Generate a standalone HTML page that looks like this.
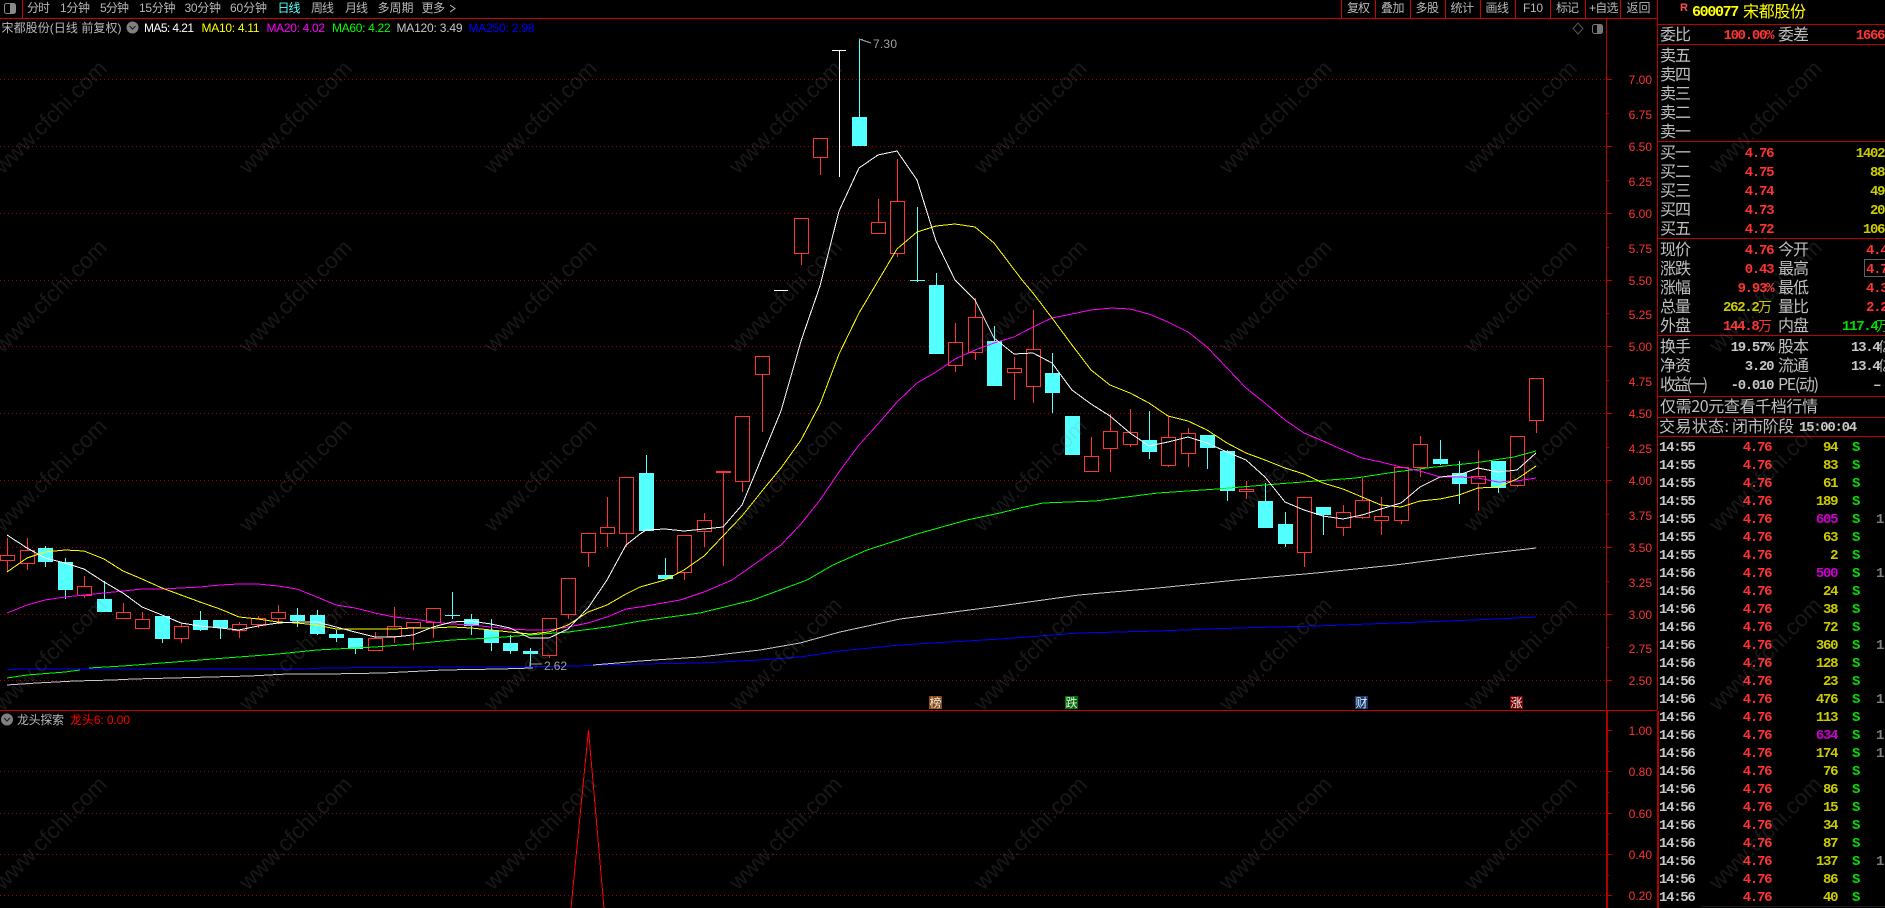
<!DOCTYPE html>
<html lang="zh-CN">
<head>
<meta charset="utf-8">
<title>宋都股份</title>
<style>
html,body{margin:0;padding:0;background:#000;width:1885px;height:908px;overflow:hidden}
svg{display:block}
text{font-family:"Liberation Sans","WenQuanYi Zen Hei","Noto Sans CJK SC",sans-serif;white-space:pre}
.t{font-size:12px;fill:#b8b8b8;font-family:"Liberation Sans","WenQuanYi Zen Hei","Noto Sans CJK SC",sans-serif}
.l{font-size:16px;fill:#c0c0c0;font-family:"WenQuanYi Zen Hei","Noto Sans CJK SC",sans-serif}
.a{font-size:12px;fill:#ff3333;text-anchor:end}
.m{font-family:"Liberation Mono",monospace;font-weight:bold;font-size:14px;letter-spacing:-1.3px}
.e{text-anchor:end;transform:translateX(-.8px)}
.r{fill:#ff3333}.y{fill:#cccc00}.g{fill:#c8c8c8}.p{fill:#cc00cc}.s{fill:#00e000}.d{fill:#808080}
.ln{fill:none;stroke-width:1;shape-rendering:crispEdges}
.wm text{font-size:22.5px;fill:rgba(140,140,140,.17)}
</style>
</head>
<body>
<svg width="1885" height="908" viewBox="0 0 1885 908" xmlns="http://www.w3.org/2000/svg">
<rect width="1885" height="908" fill="#000"/>

<!-- grid -->
<path d="M0 79.5H1607M0 146.5H1607M0 213.5H1607M0 280.5H1607M0 346.5H1607M0 413.5H1607M0 480.5H1607M0 547.5H1607M0 614.5H1607M0 680.5H1607M0 771.5H1607M0 813.5H1607M0 854.5H1607M0 895.5H1607" stroke="#a80000" stroke-width="1" stroke-dasharray="1 3" fill="none" shape-rendering="crispEdges"/>

<!-- candle wicks red -->
<path class="ln" stroke="#ff3333" d="M7.5 538V571M27.5 538V570M84.5 576V598M123.5 603V619M142.5 612V629M181.5 623V643M239.5 622V638M258.5 616V628M278.5 605V624M375.5 632V651M394.5 607V643M413.5 622V650M433.5 608V638M549.5 618V658M568.5 578V619M588.5 533V567M607.5 497V547M626.5 477V547M684.5 535V580M704.5 513V547M723.5 472V566M716 472.5H731M716 471.5H731M742.5 416V492M762.5 356V432M801.5 218V265M820.5 138V175M878.5 199V234M897.5 159V257M955.5 323V372M975.5 298V360M1014.5 357V400M1033.5 310V403M1091.5 437V472M1110.5 414V472M1130.5 409V447M1168.5 416V467M1188.5 428V467M1246.5 481V499M1304.5 497V567M1343.5 505V536M1362.5 478V519M1381.5 497V535M1401.5 467V524M1420.5 436V477M1478.5 450V511M1517.5 436V487M1536.5 378V433"/>
<!-- candle bodies red -->
<g fill="#000" stroke="#ff3333" stroke-width="1" shape-rendering="crispEdges">
<rect x="0.5" y="555.5" width="14" height="5"/>
<rect x="20.5" y="550.5" width="14" height="13"/>
<rect x="77.5" y="586.5" width="14" height="9"/>
<rect x="116.5" y="612.5" width="14" height="6"/>
<rect x="135.5" y="619.5" width="14" height="9"/>
<rect x="174.5" y="626.5" width="14" height="12"/>
<rect x="232.5" y="624.5" width="14" height="6"/>
<rect x="251.5" y="618.5" width="14" height="6"/>
<rect x="271.5" y="612.5" width="14" height="6"/>
<rect x="368.5" y="638.5" width="14" height="12"/>
<rect x="387.5" y="626.5" width="14" height="10"/>
<rect x="406.5" y="622.5" width="14" height="5"/>
<rect x="426.5" y="608.5" width="14" height="14"/>
<rect x="542.5" y="618.5" width="14" height="37"/>
<rect x="561.5" y="578.5" width="14" height="36"/>
<rect x="581.5" y="533.5" width="14" height="19"/>
<rect x="600.5" y="527.5" width="14" height="6"/>
<rect x="619.5" y="477.5" width="14" height="56"/>
<rect x="677.5" y="535.5" width="14" height="37"/>
<rect x="697.5" y="520.5" width="14" height="11"/>
<rect x="735.5" y="416.5" width="14" height="65"/>
<rect x="755.5" y="356.5" width="14" height="18"/>
<rect x="794.5" y="218.5" width="14" height="35"/>
<rect x="813.5" y="138.5" width="14" height="19"/>
<rect x="871.5" y="222.5" width="14" height="11"/>
<rect x="890.5" y="201.5" width="14" height="52"/>
<rect x="948.5" y="342.5" width="14" height="23"/>
<rect x="968.5" y="317.5" width="14" height="35"/>
<rect x="1007.5" y="368.5" width="14" height="4"/>
<rect x="1026.5" y="349.5" width="14" height="37"/>
<rect x="1084.5" y="456.5" width="14" height="15"/>
<rect x="1103.5" y="431.5" width="14" height="17"/>
<rect x="1123.5" y="432.5" width="14" height="12"/>
<rect x="1161.5" y="437.5" width="14" height="28"/>
<rect x="1181.5" y="433.5" width="14" height="20"/>
<rect x="1239.5" y="489.5" width="14" height="2"/>
<rect x="1297.5" y="497.5" width="14" height="55"/>
<rect x="1336.5" y="512.5" width="14" height="15"/>
<rect x="1355.5" y="500.5" width="14" height="17"/>
<rect x="1374.5" y="516.5" width="14" height="4"/>
<rect x="1394.5" y="467.5" width="14" height="53"/>
<rect x="1413.5" y="444.5" width="14" height="23"/>
<rect x="1471.5" y="476.5" width="14" height="7"/>
<rect x="1510.5" y="436.5" width="14" height="49"/>
<rect x="1529.5" y="378.5" width="14" height="42"/>
</g>
<!-- candle wicks cyan -->
<path class="ln" stroke="#54ffff" d="M45.5 546V567M65.5 558V599M104.5 581V612M162.5 616V643M200.5 611V631M220.5 620V639M297.5 608V627M317.5 610V635M336.5 630V642M355.5 638V654M452.5 592V619M471.5 614V635M491.5 619V651M510.5 635V654M530.5 648V666M646.5 455V531M665.5 558V579M859.5 40V146M917.5 207V282M936.5 273V354M994.5 326V386M1052.5 353V413M1072.5 416V455M1149.5 411V459M1207.5 435V469M1227.5 450V501M1265.5 483V528M1285.5 512V547M1323.5 507V535M1440.5 440V465M1459.5 461V504M1498.5 461V493"/>
<!-- candle bodies cyan -->
<g fill="#54ffff" shape-rendering="crispEdges">
<rect x="38" y="548" width="15" height="14"/>
<rect x="58" y="562" width="15" height="28"/>
<rect x="97" y="599" width="15" height="13"/>
<rect x="155" y="616" width="15" height="23"/>
<rect x="193" y="620" width="15" height="10"/>
<rect x="213" y="620" width="15" height="8"/>
<rect x="290" y="615" width="15" height="6"/>
<rect x="310" y="615" width="15" height="19"/>
<rect x="329" y="634" width="15" height="4"/>
<rect x="348" y="638" width="15" height="11"/>
<rect x="445" y="615" width="15" height="1"/>
<rect x="464" y="619" width="15" height="7"/>
<rect x="484" y="630" width="15" height="13"/>
<rect x="503" y="643" width="15" height="8"/>
<rect x="523" y="651" width="15" height="3"/>
<rect x="639" y="473" width="15" height="58"/>
<rect x="658" y="575" width="15" height="4"/>
<rect x="852" y="117" width="15" height="29"/>
<rect x="910" y="280" width="15" height="1"/>
<rect x="929" y="285" width="15" height="69"/>
<rect x="987" y="341" width="15" height="45"/>
<rect x="1045" y="373" width="15" height="20"/>
<rect x="1065" y="416" width="15" height="39"/>
<rect x="1142" y="440" width="15" height="12"/>
<rect x="1200" y="435" width="15" height="13"/>
<rect x="1220" y="451" width="15" height="40"/>
<rect x="1258" y="501" width="15" height="27"/>
<rect x="1278" y="524" width="15" height="20"/>
<rect x="1316" y="507" width="15" height="8"/>
<rect x="1433" y="459" width="15" height="5"/>
<rect x="1452" y="473" width="15" height="11"/>
<rect x="1491" y="461" width="15" height="27"/>
</g>
<!-- white doji -->
<path class="ln" stroke="#fff" d="M774 290.5H788M832 50.5H846M839.5 50V177"/>

<!-- MA250 -->
<polyline class="ln" stroke="#0000ff" points="7,670 17,669 307,669 320,668 443,667 520,667 577,666 600,665 640,664 700,663 760,660 800,657 840,651 900,645 1000,639 1079,633 1158,631 1237,628 1316,626 1395,623 1474,620 1536,617"/>
<!-- MA120 -->
<polyline class="ln" stroke="#c8c8c8" points="7,685 37,683 75,681 113,680 133,679 173,678 210,677 250,676 287,674 327,674 383,673 403,672 443,670 500,669 533,668"/>
<polyline class="ln" stroke="#c8c8c8" points="593,665 617,663 640,661 700,657 760,650 800,643 840,632 900,619 1000,606 1079,595 1158,588 1237,580 1316,573 1395,565 1474,555 1536,548"/>
<!-- MA60 -->
<polyline class="ln" stroke="#00ff00" points="7,678 27,675 65,672 80,670"/>
<polyline class="ln" stroke="#00ff00" points="89,668 123,666 162,663 200,660 239,657 278,654 317,650 336,649 375,647 413,644 452,640 491,638 530,635 568,632 607,627 640,621 700,613 753,600 807,580 833,565 867,550 917,534 967,520 1000,513 1020,508 1043,503 1095,501 1158,493 1217,489 1277,484 1316,481 1356,478 1395,472 1435,467 1474,463 1514,457 1536,451"/>
<!-- MA20 -->
<polyline class="ln" stroke="#ff00ff" points="7,613 27,605 45,600 65,597 84,595 104,593 123,591 142,589 162,589 181,588 200,587 220,585 239,584 258,584 278,586 297,589 317,597 336,605 355,608 375,613 394,617 413,619 433,622 452,624 471,625 491,627 510,629 530,630 549,630 568,627 588,623 607,617 626,609 640,607 680,600 704,592 732,580 762,559 781,545 801,524 820,500 839,472 859,445 878,424 897,402 917,383 936,372 955,359 975,350 994,343 1014,337 1033,327 1052,318 1072,314 1091,310 1112,308 1130,309 1149,314 1168,322 1188,332 1207,347 1227,368 1246,388 1265,403 1285,420 1304,433 1323,441 1343,450 1362,458 1381,462 1401,467 1420,471 1440,477 1459,477 1478,478 1498,482 1517,481 1536,478"/>
<!-- MA10 -->
<polyline class="ln" stroke="#ffff00" points="7,572 27,558 45,552 65,550 84,551 104,559 123,571 142,579 162,588 181,595 200,602 220,609 239,617 258,619 278,622 297,623 317,625 336,629 355,629 375,629 394,629 413,628 433,628 452,627 471,628 491,630 510,632 530,634 549,632 568,625 588,612 607,605 626,594 640,587 665,580 684,570 704,556 723,536 742,516 762,491 781,468 801,440 820,404 839,354 859,313 878,281 897,249 917,232 936,226 955,224 975,227 994,243 1022,280 1033,293 1052,318 1072,345 1091,370 1110,385 1130,393 1149,403 1168,416 1188,421 1207,430 1227,443 1246,453 1265,460 1285,468 1304,474 1323,483 1343,489 1362,497 1381,505 1401,507 1420,501 1440,499 1459,495 1478,488 1498,487 1517,479 1536,466"/>
<!-- MA5 -->
<polyline class="ln" stroke="#ffffff" points="7,535 27,548 45,558 65,563 84,569 104,582 123,593 142,607 162,615 181,623 200,626 220,628 239,630 258,626 278,623 297,622 317,622 336,627 355,632 375,637 394,637 413,635 433,627 452,622 471,621 491,624 510,628 530,638 549,638 568,629 588,608 607,580 626,545 640,534 646,530 665,529 684,531 704,529 723,527 742,505 762,457 781,411 801,341 820,286 839,211 859,168 878,155 897,151 917,180 936,241 955,280 975,300 994,338 1014,354 1033,353 1052,363 1072,390 1091,404 1110,416 1130,433 1149,446 1168,442 1188,437 1207,443 1227,452 1246,460 1265,477 1285,502 1304,510 1323,516 1343,519 1362,515 1381,509 1401,503 1420,487 1440,477 1459,475 1478,468 1498,472 1517,470 1536,453"/>

<!-- high / low labels -->
<path class="ln" stroke="#a0a0a0" d="M859 39.5H863M859 39L871 43M530 664H542M530 662V667"/>
<text x="873" y="48" style="font-size:12px;fill:#a0a0a0" textLength="24">7.30</text>
<text x="544" y="670" style="font-size:12px;fill:#a0a0a0" textLength="23">2.62</text>

<!-- signal tags -->
<g shape-rendering="crispEdges">
<rect x="929" y="696" width="13" height="13" fill="#8a4a10"/>
<rect x="1065" y="696" width="13" height="13" fill="#007000"/>
<rect x="1355" y="696" width="13" height="13" fill="#103a70"/>
<rect x="1510" y="696" width="13" height="13" fill="#7a0000"/>
</g>
<g style="font-size:12px;fill:#e8e8e8" text-anchor="middle">
<text x="935.5" y="707">榜</text>
<text x="1071.5" y="707">跌</text>
<text x="1361.5" y="707">财</text>
<text x="1516.5" y="707">涨</text>
</g>

<!-- sub chart indicator -->
<polyline class="ln" stroke="#ff0000" points="571,908 588.5,730 604,908"/>

<!-- frame -->
<g shape-rendering="crispEdges" fill="none" stroke-width="1">
<path stroke="#d00000" d="M0 18.5H1657M0 710.5H1657M22.5 0V18M1341.5 0V18M1375.5 0V18M1410.5 0V18M1445.5 0V18M1480.5 0V18M1515.5 0V18M1550.5 0V18M1585.5 0V18M1620.5 0V18"/>
<path stroke="#c00000" d="M1606.5 18V710M1657.5 0V710M1658 24.5H1885M1658 44.5H1885M1658 141.5H1885M1658 238.5H1885M1658 335.5H1885M1658 396.5H1885M1658 417.5H1885M1658 436.5H1885"/>
<path stroke="#b00000" stroke-width="2" d="M1607 711V908M1658 711V908"/>
<path stroke="#c00000" d="M1607 79.5H1612M1607 146.5H1612M1607 213.5H1612M1607 280.5H1612M1607 346.5H1612M1607 413.5H1612M1607 480.5H1612M1607 547.5H1612M1607 614.5H1612M1607 680.5H1612M1607 113.5H1609M1607 180.5H1609M1607 247.5H1609M1607 313.5H1609M1607 380.5H1609M1607 447.5H1609M1607 514.5H1609M1607 581.5H1609M1607 647.5H1609M1607 730.5H1612M1607 771.5H1612M1607 813.5H1612M1607 854.5H1612M1607 895.5H1612M1607 751.5H1609M1607 792.5H1609M1607 834.5H1609M1607 875.5H1609"/>
<path stroke="#1c1c1c" d="M1701 906.5H1885"/>
<rect x="1864.5" y="259.5" width="22" height="17" stroke="#606060"/>
</g>

<!-- left toggle icon -->
<rect x="4.5" y="3.5" width="11" height="10" rx="2" fill="none" stroke="#8a8a8a"/>
<rect x="10" y="4" width="5" height="9" fill="#8a8a8a"/>

<!-- top tabs -->
<g class="t-g">
<text class="t" x="27" y="12" textLength="23">分时</text>
<text class="t" x="60" y="12" textLength="30">1分钟</text>
<text class="t" x="100" y="12" textLength="29">5分钟</text>
<text class="t" x="139" y="12" textLength="36.5">15分钟</text>
<text class="t" x="184.5" y="12" textLength="36.5">30分钟</text>
<text class="t" x="230" y="12" textLength="37">60分钟</text>
<text class="t" x="277.5" y="12" textLength="23" style="fill:#55ffff">日线</text>
<text class="t" x="311" y="12" textLength="23">周线</text>
<text class="t" x="345" y="12" textLength="23">月线</text>
<text class="t" x="377.5" y="12" textLength="36">多周期</text>
<text class="t" x="421.5" y="12" textLength="23.5">更多</text>
<path d="M450 5L455 8.5L450 12" fill="none" stroke="#b8b8b8"/>
<text class="t" x="1347" y="12" textLength="23">复权</text>
<text class="t" x="1381" y="12" textLength="23.5">叠加</text>
<text class="t" x="1415.5" y="12" textLength="23.5">多股</text>
<text class="t" x="1450.5" y="12" textLength="23.5">统计</text>
<text class="t" x="1485.5" y="12" textLength="23.5">画线</text>
<text class="t" x="1523" y="12" textLength="20">F10</text>
<text class="t" x="1556" y="12" textLength="23">标记</text>
<text class="t" x="1589" y="12" textLength="29.5">+自选</text>
<text class="t" x="1626.5" y="12" textLength="24">返回</text>
</g>

<!-- legend main -->
<text class="t" x="1.5" y="32" textLength="120">宋都股份(日线 前复权)</text>
<circle cx="132.5" cy="27.5" r="6" fill="#808080"/>
<path d="M129.5 26L132.5 29L135.5 26" fill="none" stroke="#202020" stroke-width="1.2"/>
<g style="font-size:12px">
<text x="144" y="32" fill="#fff" textLength="50">MA5: 4.21</text>
<text x="201.5" y="32" fill="#ffff00" textLength="58">MA10: 4.11</text>
<text x="266.5" y="32" fill="#ff00ff" textLength="58.5">MA20: 4.02</text>
<text x="332" y="32" fill="#00ff00" textLength="58.5">MA60: 4.22</text>
<text x="396.5" y="32" fill="#c8c8c8" textLength="66">MA120: 3.49</text>
<text x="468.5" y="32" fill="#0000ff" textLength="66">MA250: 2.98</text>
</g>

<!-- legend sub -->
<circle cx="7" cy="719.5" r="6" fill="#808080"/>
<path d="M4 718L7 721L10 718" fill="none" stroke="#202020" stroke-width="1.2"/>
<text class="t" x="17" y="724" textLength="47">龙头探索</text>
<text class="t" x="70" y="724" textLength="60" style="fill:#ff0000">龙头6: 0.00</text>

<!-- chart top-right icons -->
<path d="M1578 23L1583 28.5L1578 34L1573 28.5Z" fill="none" stroke="#555"/>
<rect x="1592.5" y="24.5" width="10" height="9" rx="2" fill="none" stroke="#777"/>
<rect x="1597" y="25" width="5" height="8" fill="#777"/>

<!-- axis labels -->
<g>
<text class="a" x="1652" y="84">7.00</text>
<text class="a" x="1652" y="119">6.75</text>
<text class="a" x="1652" y="151">6.50</text>
<text class="a" x="1652" y="186">6.25</text>
<text class="a" x="1652" y="218">6.00</text>
<text class="a" x="1652" y="253">5.75</text>
<text class="a" x="1652" y="285">5.50</text>
<text class="a" x="1652" y="319">5.25</text>
<text class="a" x="1652" y="351">5.00</text>
<text class="a" x="1652" y="386">4.75</text>
<text class="a" x="1652" y="418">4.50</text>
<text class="a" x="1652" y="453">4.25</text>
<text class="a" x="1652" y="485">4.00</text>
<text class="a" x="1652" y="520">3.75</text>
<text class="a" x="1652" y="552">3.50</text>
<text class="a" x="1652" y="587">3.25</text>
<text class="a" x="1652" y="619">3.00</text>
<text class="a" x="1652" y="653">2.75</text>
<text class="a" x="1652" y="685">2.50</text>
<text class="a" x="1652" y="735">1.00</text>
<text class="a" x="1652" y="776">0.80</text>
<text class="a" x="1652" y="818">0.60</text>
<text class="a" x="1652" y="859">0.40</text>
<text class="a" x="1652" y="900">0.20</text>
</g>

<!-- header -->
<text x="1680" y="11" style="font-size:11px;font-weight:bold;fill:#ff5050">R</text>
<text class="m" x="1692" y="16" style="fill:#ffff00;font-size:15px" textLength="46">600077</text>
<text class="l" x="1743" y="17" style="fill:#ffff00" textLength="63">宋都股份</text>

<!-- 委比 -->
<text class="l" x="1660" y="40" textLength="31">委比</text>
<text class="m e r" x="1774" y="39">100.00%</text>
<text class="l" x="1778" y="40" textLength="31">委差</text>
<text class="m e r" x="1885" y="39">1666</text>

<!-- sell -->
<text class="l" x="1660" y="61" textLength="31">卖五</text>
<text class="l" x="1660" y="80" textLength="31">卖四</text>
<text class="l" x="1660" y="99" textLength="31">卖三</text>
<text class="l" x="1660" y="118" textLength="31">卖二</text>
<text class="l" x="1660" y="137" textLength="31">卖一</text>

<!-- buy -->
<text class="l" x="1660" y="158" textLength="31">买一</text>
<text class="m e r" x="1774" y="157">4.76</text><text class="m e y" x="1885" y="157">1402</text>
<text class="l" x="1660" y="177" textLength="31">买二</text>
<text class="m e r" x="1774" y="176">4.75</text><text class="m e y" x="1885" y="176">88</text>
<text class="l" x="1660" y="196" textLength="31">买三</text>
<text class="m e r" x="1774" y="195">4.74</text><text class="m e y" x="1885" y="195">49</text>
<text class="l" x="1660" y="215" textLength="31">买四</text>
<text class="m e r" x="1774" y="214">4.73</text><text class="m e y" x="1885" y="214">20</text>
<text class="l" x="1660" y="234" textLength="31">买五</text>
<text class="m e r" x="1774" y="233">4.72</text><text class="m e y" x="1885" y="233">106</text>

<!-- quote -->
<text class="l" x="1660" y="255" textLength="31">现价</text><text class="m e r" x="1774" y="254">4.76</text>
<text class="l" x="1778" y="255" textLength="31">今开</text><text class="m r" x="1866" y="254">4.40</text>
<text class="l" x="1660" y="274" textLength="31">涨跌</text><text class="m e r" x="1774" y="273">0.43</text>
<text class="l" x="1778" y="274" textLength="31">最高</text><text class="m r" x="1866" y="273">4.76</text>
<text class="l" x="1660" y="293" textLength="31">涨幅</text><text class="m e r" x="1774" y="292">9.93%</text>
<text class="l" x="1778" y="293" textLength="31">最低</text><text class="m r" x="1866" y="292">4.33</text>
<text class="l" x="1660" y="312" textLength="31">总量</text><text class="m y" x="1723" y="311">262.2</text><text class="l y" x="1758" y="312" style="fill:#cccc00;font-size:14px">万</text>
<text class="l" x="1778" y="312" textLength="31">量比</text><text class="m r" x="1866" y="311">2.22</text>
<text class="l" x="1660" y="331" textLength="31">外盘</text><text class="m r" x="1723" y="330">144.8</text><text class="l" x="1758" y="331" style="fill:#ff3333;font-size:14px">万</text>
<text class="l" x="1778" y="331" textLength="31">内盘</text><text class="m s" x="1842" y="330">117.4</text><text class="l" x="1876" y="331" style="fill:#00e000;font-size:14px">万</text>

<!-- fundamentals -->
<text class="l" x="1660" y="352" textLength="31">换手</text><text class="m e g" x="1774" y="351">19.57%</text>
<text class="l" x="1778" y="352" textLength="31">股本</text><text class="m g" x="1851" y="351">13.4</text><text class="l" x="1878" y="352" style="font-size:14px">亿</text>
<text class="l" x="1660" y="371" textLength="31">净资</text><text class="m e g" x="1774" y="370">3.20</text>
<text class="l" x="1778" y="371" textLength="31">流通</text><text class="m g" x="1851" y="370">13.4</text><text class="l" x="1878" y="371" style="font-size:14px">亿</text>
<text class="l" x="1660" y="390" textLength="48">收益(一)</text><text class="m e g" x="1774" y="389">-0.010</text>
<text class="l" x="1778" y="390" textLength="41">PE(动)</text><text class="m e g" x="1881" y="389">–</text>

<text class="l" x="1660" y="412" textLength="158">仅需20元查看千档行情</text>
<text class="l" x="1659" y="432" textLength="70">交易状态:</text>
<text class="l" x="1732" y="432" textLength="62">闭市阶段</text>
<text class="m g" x="1799" y="431">15:00:04</text>

<!-- ticks -->
<g id="ticks">
<text class="m g" x="1659" y="451">14:55</text><text class="m e r" x="1772" y="451">4.76</text><text class="m e y" x="1838" y="451">94</text><text class="m s" x="1852" y="451">S</text>
<text class="m g" x="1659" y="469">14:55</text><text class="m e r" x="1772" y="469">4.76</text><text class="m e y" x="1838" y="469">83</text><text class="m s" x="1852" y="469">S</text>
<text class="m g" x="1659" y="487">14:55</text><text class="m e r" x="1772" y="487">4.76</text><text class="m e y" x="1838" y="487">61</text><text class="m s" x="1852" y="487">S</text>
<text class="m g" x="1659" y="505">14:55</text><text class="m e r" x="1772" y="505">4.76</text><text class="m e y" x="1838" y="505">189</text><text class="m s" x="1852" y="505">S</text>
<text class="m g" x="1659" y="523">14:55</text><text class="m e r" x="1772" y="523">4.76</text><text class="m e p" x="1838" y="523">605</text><text class="m s" x="1852" y="523">S</text><text class="m d" x="1876" y="523">1</text>
<text class="m g" x="1659" y="541">14:55</text><text class="m e r" x="1772" y="541">4.76</text><text class="m e y" x="1838" y="541">63</text><text class="m s" x="1852" y="541">S</text>
<text class="m g" x="1659" y="559">14:55</text><text class="m e r" x="1772" y="559">4.76</text><text class="m e y" x="1838" y="559">2</text><text class="m s" x="1852" y="559">S</text>
<text class="m g" x="1659" y="577">14:56</text><text class="m e r" x="1772" y="577">4.76</text><text class="m e p" x="1838" y="577">500</text><text class="m s" x="1852" y="577">S</text><text class="m d" x="1876" y="577">1</text>
<text class="m g" x="1659" y="595">14:56</text><text class="m e r" x="1772" y="595">4.76</text><text class="m e y" x="1838" y="595">24</text><text class="m s" x="1852" y="595">S</text>
<text class="m g" x="1659" y="613">14:56</text><text class="m e r" x="1772" y="613">4.76</text><text class="m e y" x="1838" y="613">38</text><text class="m s" x="1852" y="613">S</text>
<text class="m g" x="1659" y="631">14:56</text><text class="m e r" x="1772" y="631">4.76</text><text class="m e y" x="1838" y="631">72</text><text class="m s" x="1852" y="631">S</text>
<text class="m g" x="1659" y="649">14:56</text><text class="m e r" x="1772" y="649">4.76</text><text class="m e y" x="1838" y="649">360</text><text class="m s" x="1852" y="649">S</text><text class="m d" x="1876" y="649">1</text>
<text class="m g" x="1659" y="667">14:56</text><text class="m e r" x="1772" y="667">4.76</text><text class="m e y" x="1838" y="667">128</text><text class="m s" x="1852" y="667">S</text>
<text class="m g" x="1659" y="685">14:56</text><text class="m e r" x="1772" y="685">4.76</text><text class="m e y" x="1838" y="685">23</text><text class="m s" x="1852" y="685">S</text>
<text class="m g" x="1659" y="703">14:56</text><text class="m e r" x="1772" y="703">4.76</text><text class="m e y" x="1838" y="703">476</text><text class="m s" x="1852" y="703">S</text><text class="m d" x="1876" y="703">1</text>
<text class="m g" x="1659" y="721">14:56</text><text class="m e r" x="1772" y="721">4.76</text><text class="m e y" x="1838" y="721">113</text><text class="m s" x="1852" y="721">S</text>
<text class="m g" x="1659" y="739">14:56</text><text class="m e r" x="1772" y="739">4.76</text><text class="m e p" x="1838" y="739">634</text><text class="m s" x="1852" y="739">S</text><text class="m d" x="1876" y="739">1</text>
<text class="m g" x="1659" y="757">14:56</text><text class="m e r" x="1772" y="757">4.76</text><text class="m e y" x="1838" y="757">174</text><text class="m s" x="1852" y="757">S</text><text class="m d" x="1876" y="757">1</text>
<text class="m g" x="1659" y="775">14:56</text><text class="m e r" x="1772" y="775">4.76</text><text class="m e y" x="1838" y="775">76</text><text class="m s" x="1852" y="775">S</text>
<text class="m g" x="1659" y="793">14:56</text><text class="m e r" x="1772" y="793">4.76</text><text class="m e y" x="1838" y="793">86</text><text class="m s" x="1852" y="793">S</text>
<text class="m g" x="1659" y="811">14:56</text><text class="m e r" x="1772" y="811">4.76</text><text class="m e y" x="1838" y="811">15</text><text class="m s" x="1852" y="811">S</text>
<text class="m g" x="1659" y="829">14:56</text><text class="m e r" x="1772" y="829">4.76</text><text class="m e y" x="1838" y="829">34</text><text class="m s" x="1852" y="829">S</text>
<text class="m g" x="1659" y="847">14:56</text><text class="m e r" x="1772" y="847">4.76</text><text class="m e y" x="1838" y="847">87</text><text class="m s" x="1852" y="847">S</text>
<text class="m g" x="1659" y="865">14:56</text><text class="m e r" x="1772" y="865">4.76</text><text class="m e y" x="1838" y="865">137</text><text class="m s" x="1852" y="865">S</text><text class="m d" x="1876" y="865">1</text>
<text class="m g" x="1659" y="883">14:56</text><text class="m e r" x="1772" y="883">4.76</text><text class="m e y" x="1838" y="883">86</text><text class="m s" x="1852" y="883">S</text>
<text class="m g" x="1659" y="901">14:56</text><text class="m e r" x="1772" y="901">4.76</text><text class="m e y" x="1838" y="901">40</text><text class="m s" x="1852" y="901">S</text>
</g>

<!-- watermark -->
<g class="wm">
<text transform="translate(3,175) rotate(-45)">www.cfchi.com</text>
<text transform="translate(248,175) rotate(-45)">www.cfchi.com</text>
<text transform="translate(493,175) rotate(-45)">www.cfchi.com</text>
<text transform="translate(738,175) rotate(-45)">www.cfchi.com</text>
<text transform="translate(983,175) rotate(-45)">www.cfchi.com</text>
<text transform="translate(1228,175) rotate(-45)">www.cfchi.com</text>
<text transform="translate(1473,175) rotate(-45)">www.cfchi.com</text>
<text transform="translate(1718,175) rotate(-45)">www.cfchi.com</text>
<text transform="translate(3,354) rotate(-45)">www.cfchi.com</text>
<text transform="translate(248,354) rotate(-45)">www.cfchi.com</text>
<text transform="translate(493,354) rotate(-45)">www.cfchi.com</text>
<text transform="translate(738,354) rotate(-45)">www.cfchi.com</text>
<text transform="translate(983,354) rotate(-45)">www.cfchi.com</text>
<text transform="translate(1228,354) rotate(-45)">www.cfchi.com</text>
<text transform="translate(1473,354) rotate(-45)">www.cfchi.com</text>
<text transform="translate(1718,354) rotate(-45)">www.cfchi.com</text>
<text transform="translate(3,533) rotate(-45)">www.cfchi.com</text>
<text transform="translate(248,533) rotate(-45)">www.cfchi.com</text>
<text transform="translate(493,533) rotate(-45)">www.cfchi.com</text>
<text transform="translate(738,533) rotate(-45)">www.cfchi.com</text>
<text transform="translate(983,533) rotate(-45)">www.cfchi.com</text>
<text transform="translate(1228,533) rotate(-45)">www.cfchi.com</text>
<text transform="translate(1473,533) rotate(-45)">www.cfchi.com</text>
<text transform="translate(1718,533) rotate(-45)">www.cfchi.com</text>
<text transform="translate(3,712) rotate(-45)">www.cfchi.com</text>
<text transform="translate(248,712) rotate(-45)">www.cfchi.com</text>
<text transform="translate(493,712) rotate(-45)">www.cfchi.com</text>
<text transform="translate(738,712) rotate(-45)">www.cfchi.com</text>
<text transform="translate(983,712) rotate(-45)">www.cfchi.com</text>
<text transform="translate(1228,712) rotate(-45)">www.cfchi.com</text>
<text transform="translate(1473,712) rotate(-45)">www.cfchi.com</text>
<text transform="translate(1718,712) rotate(-45)">www.cfchi.com</text>
<text transform="translate(3,891) rotate(-45)">www.cfchi.com</text>
<text transform="translate(248,891) rotate(-45)">www.cfchi.com</text>
<text transform="translate(493,891) rotate(-45)">www.cfchi.com</text>
<text transform="translate(738,891) rotate(-45)">www.cfchi.com</text>
<text transform="translate(983,891) rotate(-45)">www.cfchi.com</text>
<text transform="translate(1228,891) rotate(-45)">www.cfchi.com</text>
<text transform="translate(1473,891) rotate(-45)">www.cfchi.com</text>
<text transform="translate(1718,891) rotate(-45)">www.cfchi.com</text>
</g>
</svg>
</body>
</html>
